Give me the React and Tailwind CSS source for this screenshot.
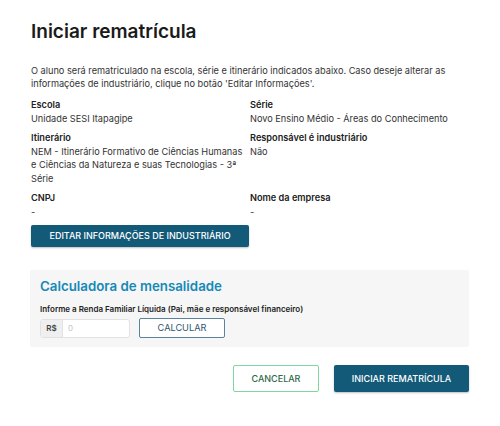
export default function App() {
  const fields = [
    { label: "Escola", value: "Unidade SESI Itapagipe" },
    { label: "Série", value: "Novo Ensino Médio - Áreas do Conhecimento" },
    {
      label: "Itinerário",
      value:
        "NEM - Itinerário Formativo de Ciências Humanas e Ciências da Natureza e suas Tecnologias - 3ª Série",
    },
    { label: "Responsável é industriário", value: "Não" },
    { label: "CNPJ", value: "-" },
    { label: "Nome da empresa", value: "-" },
  ];

  return (
    <div className="w-[500px] h-[426px] bg-white font-['Inter',sans-serif] text-[#222]">
      <div className="pl-[31px] pr-[31px] pt-[20px]">
        <h1 className="text-[19px] leading-[24px] font-semibold text-[#1a1a1a]">
          Iniciar rematrícula
        </h1>

        <p className="mt-[20px] text-[9.2px] leading-[13px] text-[#333]">
          O aluno será rematriculado na escola, série e itinerário indicados abaixo. Caso deseje alterar as
          informações de industriário, clique no botão 'Editar Informações'.
        </p>

        <div className="mt-[7.5px] grid grid-cols-2 gap-y-[5.5px] text-[9.2px]">
          {fields.map((f) => (
            <div key={f.label} className="pr-[4px]">
              <div className="font-semibold leading-[13px] text-[#222]">{f.label}</div>
              <div className="mt-[1px] leading-[13.5px] text-[#333]">{f.value}</div>
            </div>
          ))}
        </div>

        <button className="mt-[7px] w-[218px] h-[22px] rounded-[2px] bg-[#135a79] text-white text-[9px] font-medium shadow-[0_1px_2px_rgba(0,0,0,0.25)]">
          EDITAR INFORMAÇÕES DE INDUSTRIÁRIO
        </button>

        <div className="mt-[23px] -ml-[1px] w-[439px] bg-[#f6f6f6] rounded-[2px] pl-[10px] pr-[10px] pt-[7px] pb-[9px]">
          <h2 className="text-[13.3px] leading-[18px] font-semibold text-[#1789b6]">
            Calculadora de mensalidade
          </h2>
          <div className="mt-[9px] text-[8px] leading-[10px] font-semibold text-[#222]">
            Informe a Renda Familiar Líquida (Pai, mãe e responsável financeiro)
          </div>
          <div className="mt-[4px] flex items-center">
            <div className="flex h-[19px] w-[90px] rounded-[3px] border border-[#e2e2e2] overflow-hidden bg-white">
              <span className="w-[22px] flex items-center justify-center bg-[#efefef] border-r border-[#e2e2e2] text-[8px] font-semibold text-[#444]">
                R$
              </span>
              <span className="flex-1 pl-[5px] flex items-center text-[8px] text-[#c4c4c4]">0</span>
            </div>
            <button className="ml-[9px] w-[86px] h-[20px] rounded-[2px] border border-[#5b8399] bg-white text-[9.2px] text-[#2d5670]">
              CALCULAR
            </button>
          </div>
        </div>

        <div className="mt-[18px] flex justify-end gap-[15px]">
          <button className="w-[86px] h-[27px] rounded-[2px] border border-[#7fd6a0] bg-white text-[9px] font-medium text-[#2f6a4b]">
            CANCELAR
          </button>
          <button className="w-[135px] h-[27px] rounded-[2px] bg-[#135a79] text-white text-[9px] font-medium shadow-[0_1px_2px_rgba(0,0,0,0.25)]">
            INICIAR REMATRÍCULA
          </button>
        </div>
      </div>
    </div>
  );
}
